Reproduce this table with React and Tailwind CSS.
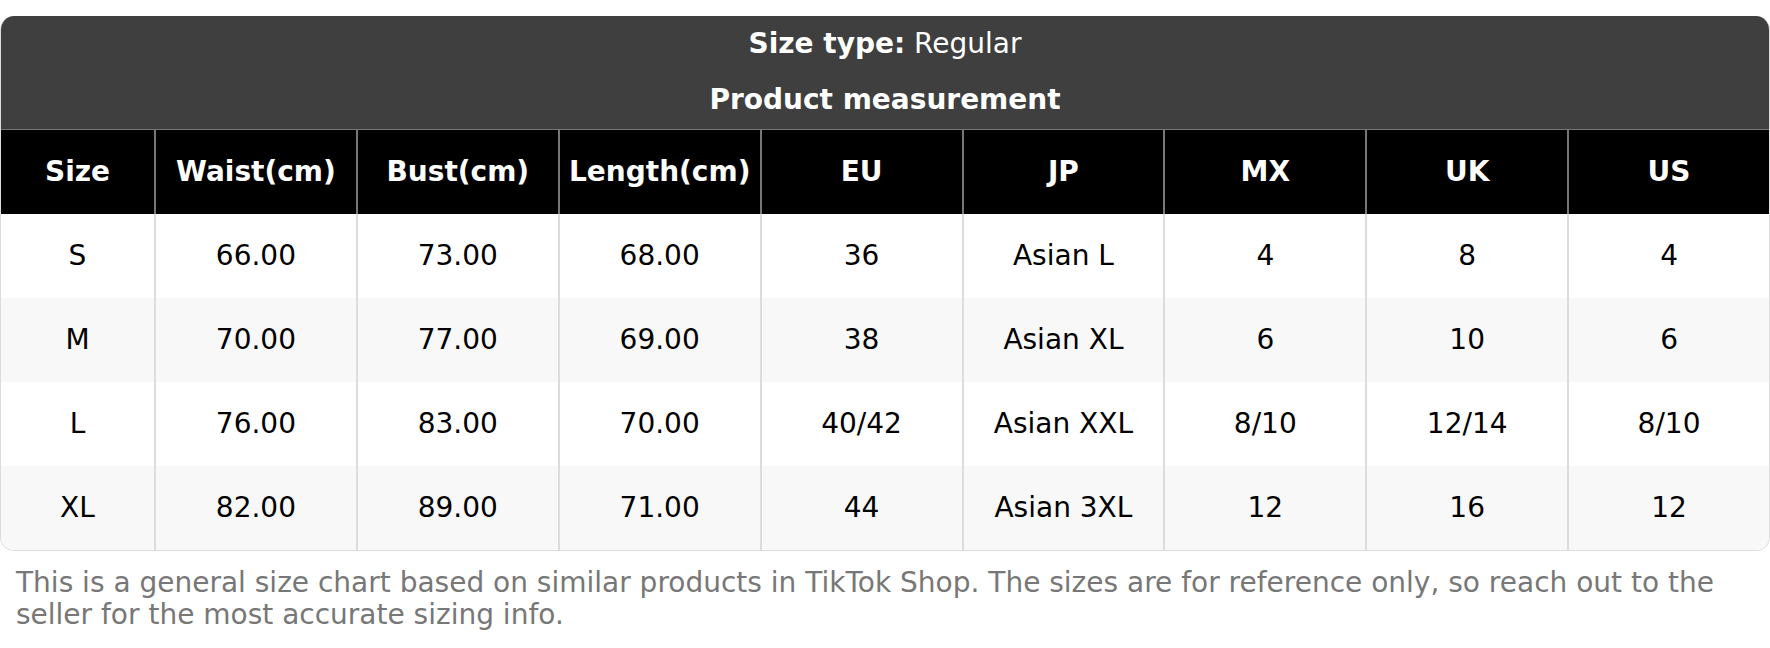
import React from 'react';

const columns = ['Size', 'Waist(cm)', 'Bust(cm)', 'Length(cm)', 'EU', 'JP', 'MX', 'UK', 'US'];

const rows = [
    ['S', '66.00', '73.00', '68.00', '36', 'Asian L', '4', '8', '4'],
    ['M', '70.00', '77.00', '69.00', '38', 'Asian XL', '6', '10', '6'],
    ['L', '76.00', '83.00', '70.00', '40/42', 'Asian XXL', '8/10', '12/14', '8/10'],
    ['XL', '82.00', '89.00', '71.00', '44', 'Asian 3XL', '12', '16', '12'],
];

const SizeChart = () => {
    return (
        <div className="w-[1770px] bg-white pt-[16px] font-['DejaVu_Sans',sans-serif]">
            <div className="rounded-[14px] overflow-hidden border-b border-x border-[#dcdcdc]">
                {/* title block */}
                <div className="bg-[#3f3f3f] text-white text-center text-[28px] pt-[1px] pb-[1px]">
                    <div className="leading-[54px]">
                        <span className="font-bold">Size type:</span> Regular
                    </div>
                    <div className="leading-[57px] font-bold">Product measurement</div>
                </div>

                {/* column headers */}
                <div className="grid grid-cols-[153px_repeat(8,1fr)] bg-black border-t border-[#777]">
                    {columns.map((col, i) => (
                        <div
                            key={col}
                            className={`h-[84px] flex items-center justify-center text-white font-bold text-[28px] ${i > 0 ? 'border-l-2 border-[#777]' : ''}`}
                        >
                            {col}
                        </div>
                    ))}
                </div>

                {/* body */}
                {rows.map((row, r) => (
                    <div
                        key={row[0]}
                        className={`grid grid-cols-[153px_repeat(8,1fr)] ${r % 2 === 1 ? 'bg-[#f8f8f8]' : 'bg-white'}`}
                    >
                        {row.map((cell, i) => (
                            <div
                                key={i}
                                className={`h-[84px] flex items-center justify-center text-black text-[28px] ${i > 0 ? 'border-l-2 border-[#dcdcdc]' : ''}`}
                            >
                                {cell}
                            </div>
                        ))}
                    </div>
                ))}
            </div>

            <p className="px-[16px] pt-[16px] text-[28px] leading-[32px] text-[#777]">
                This is a general size chart based on similar products in TikTok Shop. The sizes are for reference only, so reach out to the seller for the most accurate sizing info.
            </p>
        </div>
    );
};

export default SizeChart;
